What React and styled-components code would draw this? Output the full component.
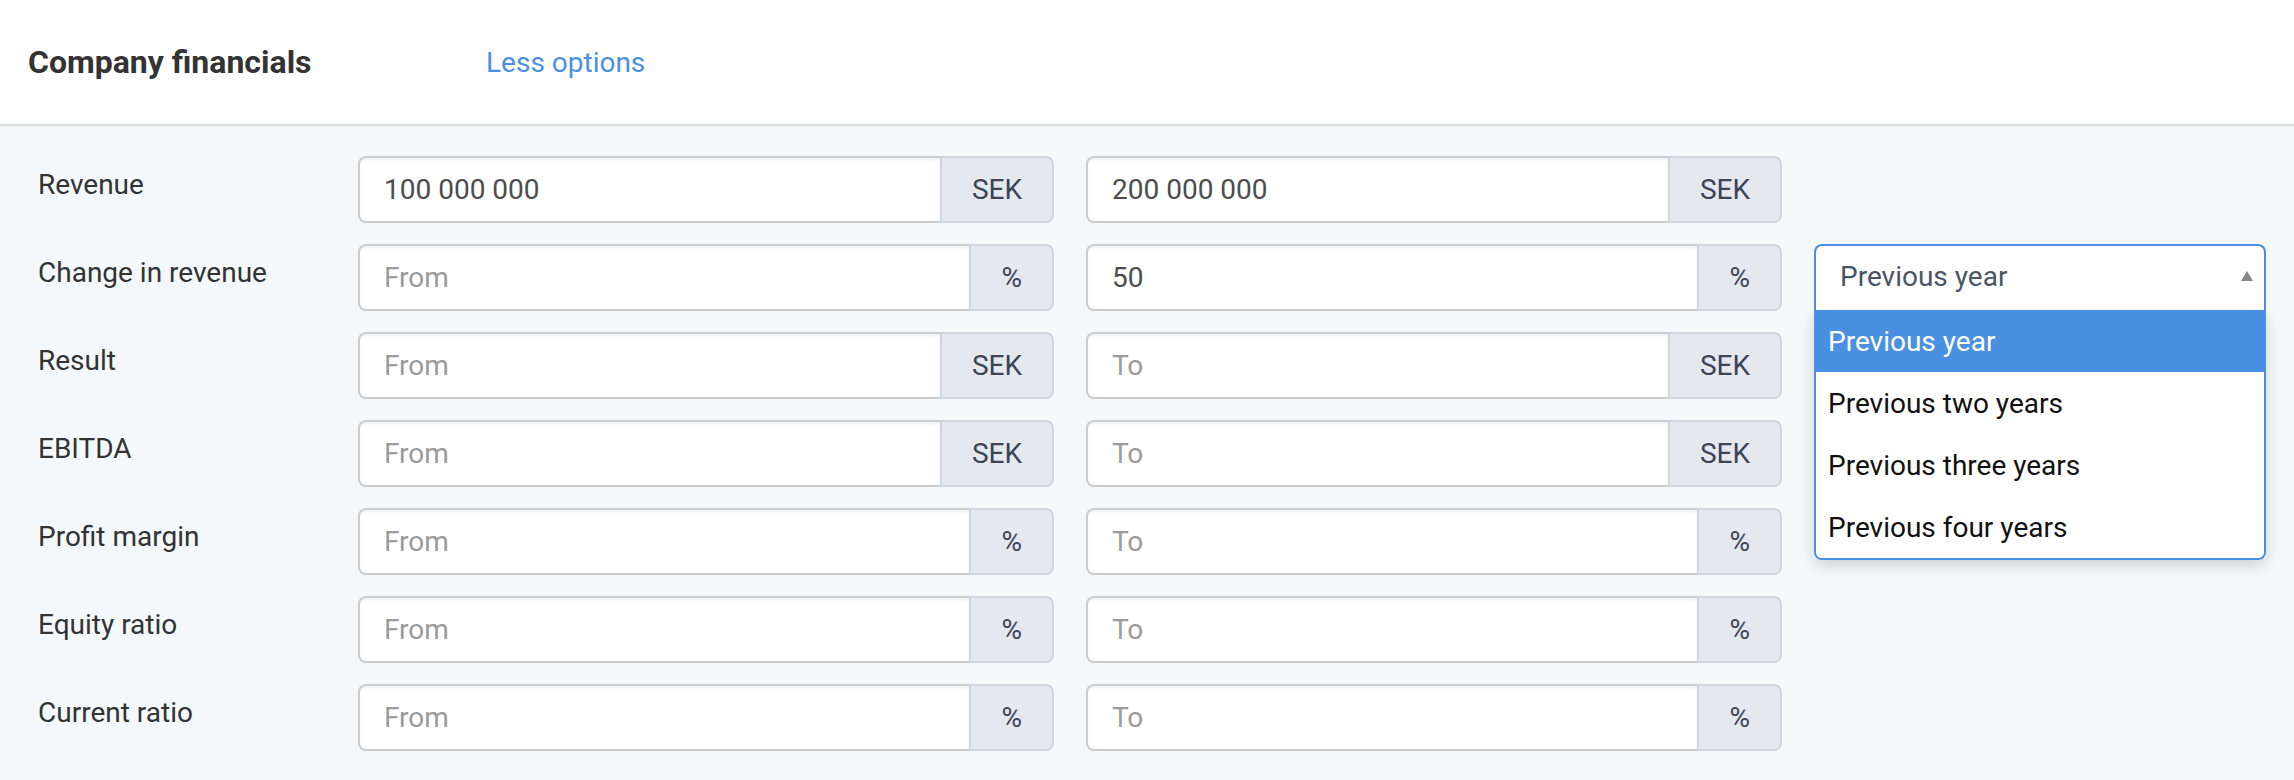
import React from 'react';
import styled, { createGlobalStyle } from 'styled-components';

const GlobalStyle = createGlobalStyle`
  html, body { margin: 0; padding: 0; }
  body {
    font-family: Roboto, "Liberation Sans", Arial, sans-serif;
    background: #f5f8fb;
  }
  * { box-sizing: border-box; }
`;

const Page = styled.div`
  width: 2294px;
  height: 780px;
  background: #f5f8fb;
  overflow: hidden;
`;

const Header = styled.header`
  height: 126px;
  background: #ffffff;
  border-bottom: 2px solid #dcdcdc;
  display: flex;
  align-items: center;
  padding-left: 28px;
`;

const Title = styled.h2`
  margin: 0;
  width: 458px;
  font-size: 32px;
  font-weight: 700;
  color: #333333;
`;

const LinkButton = styled.a`
  font-size: 28px;
  color: #4a90e2;
  text-decoration: none;
  cursor: pointer;
`;

const Content = styled.div`
  padding: 30px 28px 0 38px;
  display: flex;
  flex-direction: column;
  gap: 21px;
`;

const Row = styled.div`
  display: flex;
  align-items: flex-start;
  height: 67px;
`;

const Label = styled.div`
  width: 320px;
  font-size: 28px;
  line-height: 34px;
  padding-top: 12px;
  color: #333333;
`;

const Fields = styled.div`
  display: flex;
  gap: 32px;
  height: 100%;
`;

const Group = styled.div`
  width: 696px;
  height: 100%;
  display: flex;
`;

const Input = styled.input`
  flex: 1;
  min-width: 0;
  height: 100%;
  border: 2px solid #cccccc;
  border-right: none;
  border-radius: 8px 0 0 8px;
  padding: 0 24px;
  font-family: Roboto, "Liberation Sans", Arial, sans-serif;
  font-size: 28px;
  color: #4d4d4d;
  background: #ffffff;
  box-shadow: inset 0 2px 3px rgba(0, 0, 0, 0.06);
  outline: none;
  &::placeholder { color: #9b9b9b; }
`;

const Addon = styled.span`
  display: flex;
  align-items: center;
  justify-content: center;
  padding: 0 30px;
  background: #e4e8ef;
  border: 2px solid #cfd6df;
  border-radius: 0 8px 8px 0;
  color: #3b4555;
  font-size: 28px;
`;

const SelectWrap = styled.div`
  position: relative;
  width: 452px;
  height: 66px;
`;

const Control = styled.div`
  height: 66px;
  background: #ffffff;
  border: 2px solid #4a90e2;
  border-bottom: none;
  border-radius: 8px 8px 0 0;
  display: flex;
  align-items: center;
  justify-content: space-between;
  padding: 0 11px 4px 24px;
  font-size: 28px;
  color: #4a5563;
`;

const Arrow = styled.span`
  width: 0;
  height: 0;
  border-left: 6px solid transparent;
  border-right: 6px solid transparent;
  border-bottom: 10px solid #888888;
`;

const Menu = styled.div`
  position: absolute;
  top: 100%;
  left: 0;
  right: 0;
  background: #ffffff;
  border: 2px solid #4a90e2;
  border-top: none;
  border-radius: 0 0 8px 8px;
  box-shadow: 0 6px 14px rgba(0, 0, 0, 0.15);
  overflow: hidden;
  z-index: 10;
`;

const Option = styled.div`
  height: 62px;
  display: flex;
  align-items: center;
  padding: 0 12px;
  font-size: 28px;
  color: ${(p) => (p.$active ? '#ffffff' : '#111111')};
  background: ${(p) => (p.$active ? '#4a90e2' : '#ffffff')};
`;

const rows = [
  { label: 'Revenue', unit: 'SEK', from: '100 000 000', to: '200 000 000' },
  { label: 'Change in revenue', unit: '%', from: '', to: '50', select: true },
  { label: 'Result', unit: 'SEK', from: '', to: '' },
  { label: 'EBITDA', unit: 'SEK', from: '', to: '' },
  { label: 'Profit margin', unit: '%', from: '', to: '' },
  { label: 'Equity ratio', unit: '%', from: '', to: '' },
  { label: 'Current ratio', unit: '%', from: '', to: '' },
];

const options = ['Previous year', 'Previous two years', 'Previous three years', 'Previous four years'];

function PeriodSelect() {
  return (
    <SelectWrap>
      <Control>
        <span>Previous year</span>
        <Arrow />
      </Control>
      <Menu>
        {options.map((o, i) => (
          <Option key={o} $active={i === 0}>{o}</Option>
        ))}
      </Menu>
    </SelectWrap>
  );
}

export default function App() {
  return (
    <Page>
      <GlobalStyle />
      <Header>
        <Title>Company financials</Title>
        <LinkButton>Less options</LinkButton>
      </Header>
      <Content>
        {rows.map((r) => (
          <Row key={r.label}>
            <Label>{r.label}</Label>
            <Fields>
              <Group>
                <Input placeholder="From" defaultValue={r.from} />
                <Addon>{r.unit}</Addon>
              </Group>
              <Group>
                <Input placeholder="To" defaultValue={r.to} />
                <Addon>{r.unit}</Addon>
              </Group>
              {r.select && <PeriodSelect />}
            </Fields>
          </Row>
        ))}
      </Content>
    </Page>
  );
}
